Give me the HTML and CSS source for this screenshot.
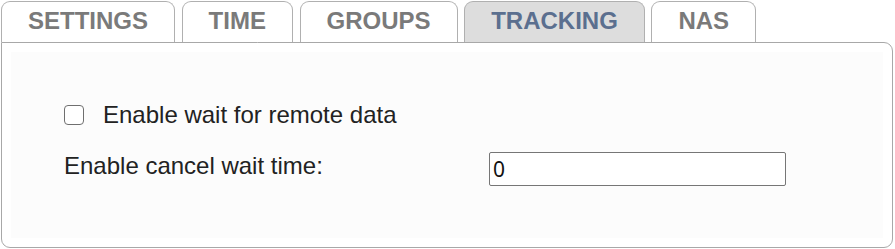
FILE: index.html
```html
<!DOCTYPE html>
<html>
<head>
<meta charset="utf-8">
<link rel="stylesheet" href="styles.css">
</head>
<body>
<div class="wrap">
  <div class="tabs">
    <div class="tab">SETTINGS</div>
    <div class="tab">TIME</div>
    <div class="tab">GROUPS</div>
    <div class="tab active">TRACKING</div>
    <div class="tab">NAS</div>
  </div>
  <div class="panel">
    <div class="inner">
      <label class="row check-row">
        <input type="checkbox" class="check">
        <span>Enable wait for remote data</span>
      </label>
      <div class="row field-row">
        <span class="field-label">Enable cancel wait time:</span>
        <input type="text" class="text-input" value="0">
      </div>
    </div>
  </div>
</div>
</body>
</html>
```

FILE: styles.css
```css
html, body {
  margin: 0;
  padding: 0;
  background: #ffffff;
}
.wrap {
  padding: 1px 2px 1px 1px;
  font-family: "Liberation Sans", Arial, sans-serif;
}
.tabs {
  display: flex;
  gap: 6.6px;
  height: 41px;
}
.tab {
  box-sizing: border-box;
  height: 41px;
  padding: 0 26px;
  border: 1px solid #b0b0b0;
  border-bottom: none;
  border-radius: 9px 9px 0 0;
  font-size: 24px;
  font-weight: bold;
  color: #7a7a7a;
  line-height: 38px;
  background: #ffffff;
}
.tab.active {
  background: #dddddd;
  color: #5b6f8f;
}
.panel {
  box-sizing: border-box;
  height: 206px;
  border: 1px solid #a8a8a8;
  border-radius: 0 9px 9px 9px;
  padding: 9px;
  background: #ffffff;
}
.inner {
  height: 100%;
  box-sizing: border-box;
  background: #fcfcfc;
  padding: 50px 0 0 53px;
}
.row {
  display: flex;
  align-items: center;
}
.check-row {
  gap: 19px;
  font-size: 24px;
  color: #222;
  height: 26px;
}
.check {
  appearance: none;
  -webkit-appearance: none;
  margin: 0;
  width: 20px;
  height: 20px;
  box-sizing: border-box;
  border: 1.6px solid #6f6f6f;
  border-radius: 4px;
  background: #fff;
}
.field-row {
  margin-top: 24px;
}
.field-label {
  width: 425px;
  font-size: 24px;
  color: #222;
  padding-bottom: 6px;
}
.text-input {
  box-sizing: border-box;
  width: 297px;
  height: 34px;
  margin: 0;
  border: 1px solid #767676;
  border-radius: 2px;
  padding: 0 3px;
  font-family: "Noto Sans", "Open Sans", sans-serif;
  font-size: 21px;
  color: #111;
  background: #fff;
}
```
